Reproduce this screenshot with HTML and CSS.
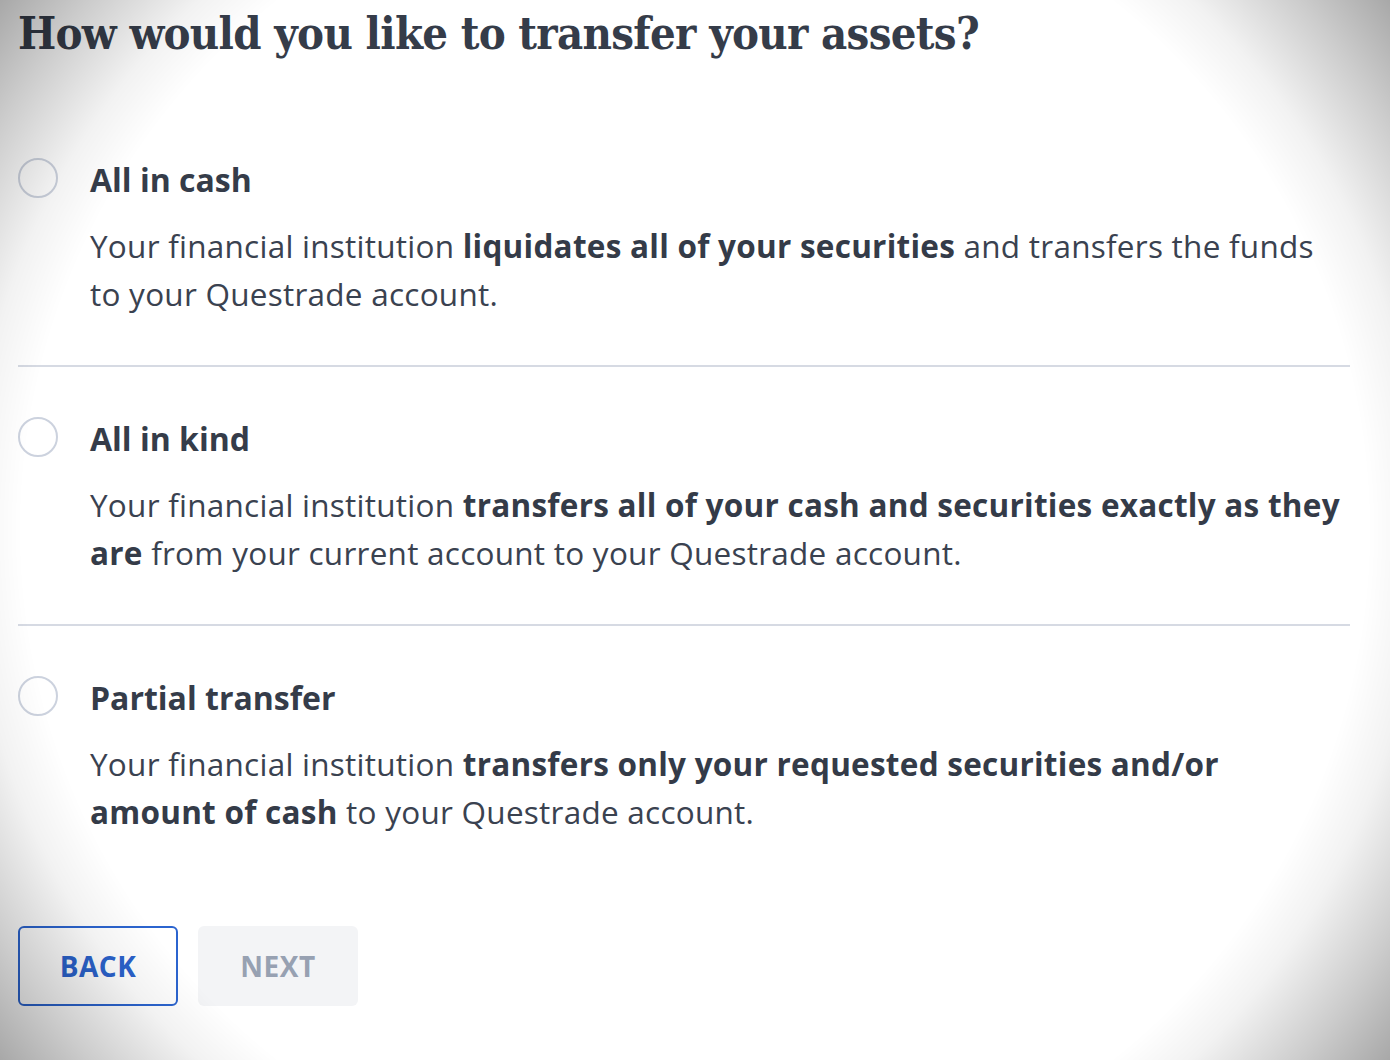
FILE: index.html
```html
<!DOCTYPE html>
<html lang="en">
<head>
<meta charset="utf-8">
<title>Transfer assets</title>
<link rel="stylesheet" href="styles.css">
</head>
<body>
<main class="page">
  <h1 class="heading">How would you like to transfer your assets?</h1>
  <div class="options">
    <div class="option">
      <span class="radio"></span>
      <div class="option-body">
        <div class="option-title">All in cash</div>
        <p class="option-desc">Your financial institution <b>liquidates all of your securities</b> and transfers the funds to your Questrade account.</p>
      </div>
    </div>
    <div class="option">
      <span class="radio"></span>
      <div class="option-body">
        <div class="option-title">All in kind</div>
        <p class="option-desc">Your financial institution <b>transfers all of your cash and securities exactly as they are</b> from your current account to your Questrade account.</p>
      </div>
    </div>
    <div class="option">
      <span class="radio"></span>
      <div class="option-body">
        <div class="option-title">Partial transfer</div>
        <p class="option-desc">Your financial institution <b>transfers only your requested securities and/or amount of cash</b> to your Questrade account.</p>
      </div>
    </div>
  </div>
  <div class="actions">
    <button class="btn btn-back">BACK</button>
    <button class="btn btn-next" disabled>NEXT</button>
  </div>
</main>
<div class="vignette"></div>
</body>
</html>
```

FILE: styles.css
```css
html, body {
  margin: 0;
  padding: 0;
  background: #ffffff;
}
body {
  font-family: "Open Sans", "Noto Sans", sans-serif;
  color: #3a4250;
  width: 1390px;
  height: 1060px;
  overflow: hidden;
}
.page {
  padding: 0 40px 0 18px;
}
.heading {
  margin: 0 0 40px 0;
  font-family: "DejaVu Serif Condensed", "DejaVu Serif", "Liberation Serif", serif;
  font-stretch: condensed;
  font-weight: 700;
  font-size: 45px;
  line-height: 68px;
  color: #353c49;
  letter-spacing: -0.7px;
  white-space: nowrap;
}
.option {
  display: flex;
  align-items: flex-start;
  gap: 32px;
  padding: 52px 0 47px 0;
  border-bottom: 2px solid #d6dae3;
}
.option:last-child {
  border-bottom: none;
}
.radio {
  flex: none;
  width: 36px;
  height: 36px;
  margin-top: -2px;
  border: 2px solid #ccd2de;
  border-radius: 50%;
  background: #fff;
}
.option-body {
  flex: 1;
}
.option-title {
  font-size: 32px;
  line-height: 40px;
  font-weight: 700;
  color: #353c49;
}
.option-desc {
  margin: 22px 0 0 0;
  font-size: 31.5px;
  line-height: 48px;
  letter-spacing: 0.25px;
  color: #3a4250;
}
.option-desc b {
  font-weight: 700;
  color: #343b48;
}
.actions {
  display: flex;
  gap: 20px;
  margin-top: 43px;
}
.btn {
  width: 160px;
  height: 80px;
  border-radius: 6px;
  font-family: "Open Sans", "Noto Sans", sans-serif;
  font-weight: 700;
  font-size: 28px;
  letter-spacing: 0.5px;
  padding: 0;
}
.btn-back {
  background: transparent;
  border: 2px solid #2b64cf;
  color: #2a62cc;
}
.btn-next {
  background: #f3f4f6;
  border: none;
  color: #97a1b2;
}
.vignette {
  position: fixed;
  inset: 0;
  pointer-events: none;
  background: radial-gradient(circle farthest-corner at center, rgba(0,0,0,0) 77%, rgba(0,0,0,0.05) 83%, rgba(0,0,0,0.2) 92%, rgba(0,0,0,0.34) 100%);
  mix-blend-mode: multiply;
}
```
